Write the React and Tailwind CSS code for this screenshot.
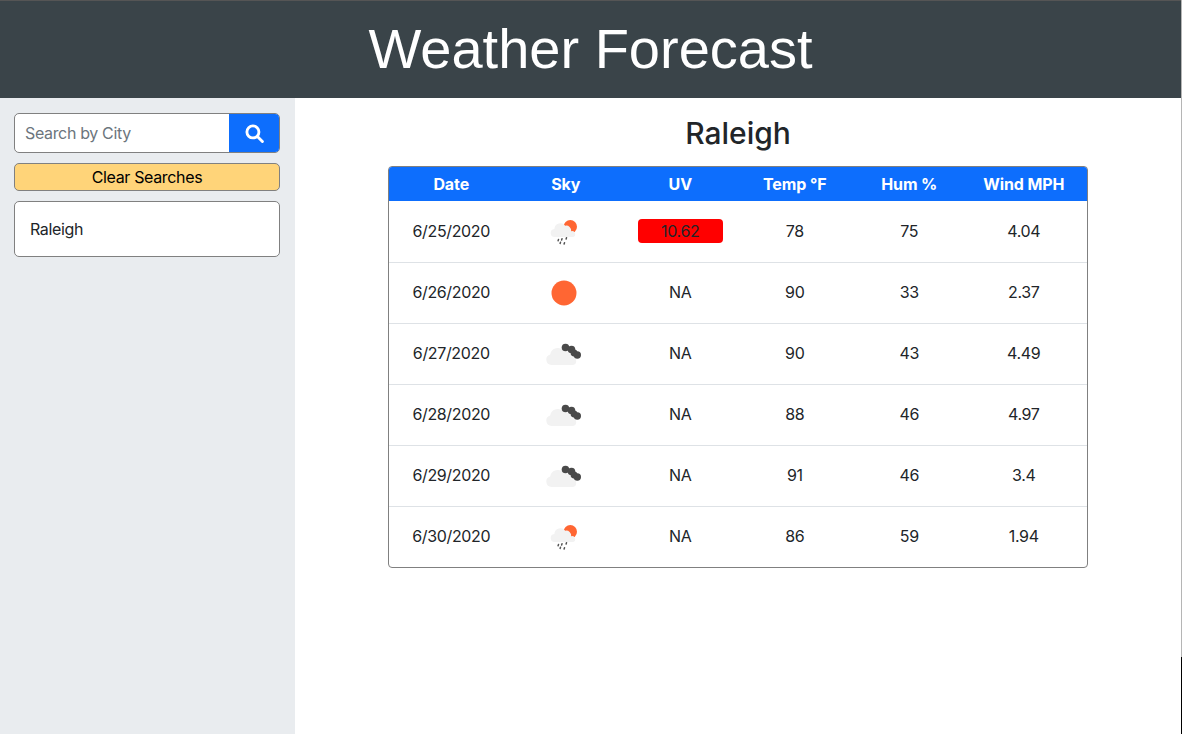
import React from "react";

function RainSun() {
  return (
    <svg width="30" height="28" viewBox="0 0 30 28" className="block">
      <circle cx="21.300" cy="8.700" r="6.700" fill="#ff6633" />
      <path fill="#f2f2f2" d="M6 19a4 4 0 0 1-.6-8 6 6 0 0 1 10.800-3.300 5 5 0 0 1 6 5.500 2.900 2.900 0 0 1 1.800 5.800z" />
      <g stroke="#555" strokeWidth="1.500" strokeLinecap="round">
        <path d="M9.500 21.500l-.4 1.200M13 20.800l-.4 1.200M17.500 19.800l-.4 1.200M11.500 24.200l-.4 1.200M15.500 24.800l-.4 1.200" />
      </g>
    </svg>
  );
}

function Clouds() {
  return (
    <svg width="36" height="22" viewBox="0 0 36 22" className="block">
      <path fill="#f2f2f2" d="M5.500 22a5.300 5.300 0 0 1-1.300-10.400 7.500 7.500 0 0 1 13.800-3.100 6 6 0 0 1 7.500 5.800 3.900 3.900 0 0 1 1.500 7.700z" />
      <g fill="#4a4a4a">
        <circle cx="19.500" cy="4.500" r="3.800" />
        <circle cx="25.500" cy="6.500" r="3.800" />
        <circle cx="28" cy="10" r="3.400" />
        <circle cx="31.300" cy="12" r="3.700" />
      </g>
    </svg>
  );
}

function Sun() {
  return (
    <svg width="26" height="26" viewBox="0 0 26 26" className="block">
      <circle cx="13" cy="13" r="12.500" fill="#ff6633" />
    </svg>
  );
}

const rows = [
  ["6/25/2020", "rain", "10.62", "78", "75", "4.04"],
  ["6/26/2020", "sun", "NA", "90", "33", "2.37"],
  ["6/27/2020", "clouds", "NA", "90", "43", "4.49"],
  ["6/28/2020", "clouds", "NA", "88", "46", "4.97"],
  ["6/29/2020", "clouds", "NA", "91", "46", "3.4"],
  ["6/30/2020", "rain", "NA", "86", "59", "1.94"],
];

function Sky({ kind }) {
  if (kind === "rain") return <RainSun />;
  if (kind === "sun") return <Sun />;
  return <Clouds />;
}

export default function App() {
  return (
    <div className="flex h-[734px] w-[1182px] overflow-hidden bg-white font-['Inter','Liberation_Sans',sans-serif] text-[#212529]">
      <div className="flex min-w-0 flex-1 flex-col">
        <header className="flex h-[98px] items-center justify-center border-t border-[#555] bg-[#3a4449] pb-[2px]">
          <h1 className="font-['Liberation_Sans',sans-serif] text-[56px] leading-none text-white">Weather Forecast</h1>
        </header>
        <div className="flex flex-1">
          <aside className="flex w-[295px] flex-col bg-[#e9ecef] px-[14px] pt-[15px] tracking-[-0.35px]">
            <div className="flex h-10 w-[266px] overflow-hidden rounded-[5px] border border-[#808080] bg-white">
              <div className="flex flex-1 items-center pl-[10px] text-base text-[#6c757d]">Search by City</div>
              <div className="flex w-[50px] items-center justify-center bg-[#0d6efd]">
                <svg width="19" height="19" viewBox="0 0 18 18" fill="none" stroke="white" strokeWidth="2.700" strokeLinecap="round">
                  <circle cx="7.500" cy="7.500" r="5.700" />
                  <path d="M12 12l4.500 4.500" />
                </svg>
              </div>
            </div>
            <div className="mt-[10px] flex h-7 w-[266px] items-center justify-center rounded-[5px] border border-[#808080] bg-[#ffd479] text-base text-black">
              Clear Searches
            </div>
            <div className="mt-[10px] flex h-14 w-[266px] items-center rounded-[5px] border border-[#808080] bg-white pl-[15px] text-base">
              Raleigh
            </div>
          </aside>
          <main className="flex flex-1 flex-col items-center pt-4">
            <h2 className="h-[52px] text-[30px] font-medium leading-[38px]">Raleigh</h2>
            <div className="w-[700px] overflow-hidden rounded-[4px] border border-[#808080] text-base">
              <div className="grid h-[34px] grid-cols-6 items-center bg-[#0d6efd] pl-[5px] pr-[6px] text-center font-bold tracking-[-0.1px] text-white">
                <div>Date</div>
                <div>Sky</div>
                <div>UV</div>
                <div>Temp °F</div>
                <div>Hum %</div>
                <div>Wind MPH</div>
              </div>
              {rows.map((r, i) => (
                <div key={r[0]} className={`grid h-[61px] grid-cols-6 items-center pb-[2px] pl-[5px] pr-[6px] text-center tracking-[-0.35px] ${i > 0 ? "border-t border-[#dee2e6]" : ""}`}>
                  <div>{r[0]}</div>
                  <div className="flex justify-center pr-[4px] pt-[2px]"><Sky kind={r[1]} /></div>
                  <div className="flex justify-center">
                    {r[2] === "NA" ? r[2] : <span className="block h-6 w-[85px] rounded-[4px] bg-[#ff0000] leading-6">{r[2]}</span>}
                  </div>
                  <div>{r[3]}</div>
                  <div>{r[4]}</div>
                  <div>{r[5]}</div>
                </div>
              ))}
            </div>
          </main>
        </div>
      </div>
      <div className="flex w-px flex-col">
        <div className="h-[657px] bg-[#b5b5b5]" />
        <div className="flex-1 bg-black" />
      </div>
    </div>
  );
}
